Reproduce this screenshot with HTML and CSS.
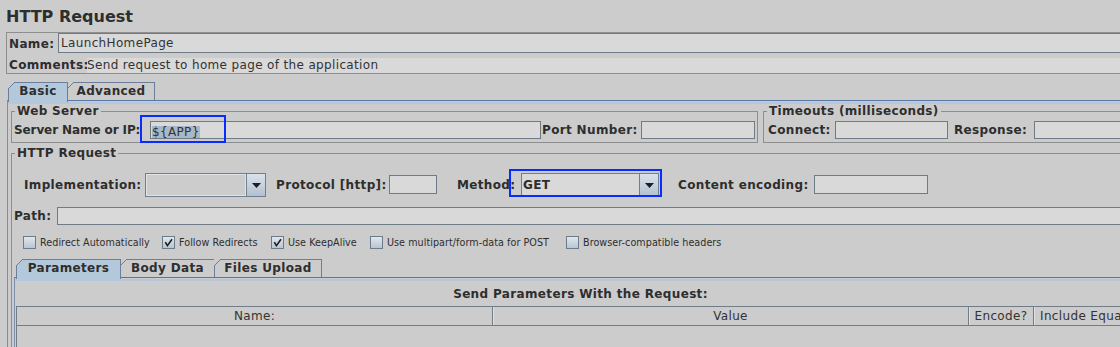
FILE: index.html
```html
<!DOCTYPE html>
<html>
<head>
<meta charset="utf-8">
<title>HTTP Request</title>
<link rel="stylesheet" href="styles.css">
</head>
<body>
<div class="page">
  <h1 class="title">HTTP Request</h1>

  <div class="namebox">
    <div class="row name-row">
      <span class="lbl name-lbl">Name:</span>
      <div class="field name-field">LaunchHomePage</div>
    </div>
    <div class="row comments-row">
      <span class="lbl comments-lbl">Comments:</span>
      <div class="comments-area">Send request to home page of the application</div>
    </div>
  </div>

  <div class="tabs outer-tabs">
    <div class="tab selected tab-basic">Basic</div>
    <div class="tab tab-adv">Advanced</div>
  </div>

  <div class="outer-panel">
    <div class="outer-inner">
      <div class="server-row">
        <fieldset class="group web-server">
          <legend>Web Server</legend>
          <div class="frow">
            <span class="lbl l-server">Server Name or IP:</span>
            <div class="field f-server"><span class="sel">${APP}</span></div>
            <span class="lbl l-port">Port Number:</span>
            <div class="field f-port"></div>
          </div>
        </fieldset>
        <fieldset class="group timeouts">
          <legend>Timeouts (milliseconds)</legend>
          <div class="frow">
            <span class="lbl l-connect">Connect:</span>
            <div class="field f-connect"></div>
            <span class="lbl l-response">Response:</span>
            <div class="field f-response"></div>
          </div>
        </fieldset>
      </div>

      <fieldset class="group http-group">
        <legend>HTTP Request</legend>
        <div class="impl-row">
          <span class="lbl l-impl">Implementation:</span>
          <div class="combo impl-combo">
            <div class="combo-val"></div>
            <div class="combo-btn"><svg width="9" height="5" viewBox="0 0 9 5"><polygon points="0,0 9,0 4.5,5" fill="#1e1e1e"/></svg></div>
          </div>
          <span class="lbl l-proto">Protocol [http]:</span>
          <div class="field f-proto"></div>
          <span class="lbl l-method">Method:</span>
          <div class="combo method-combo">
            <div class="combo-val">GET</div>
            <div class="combo-btn"><svg width="9" height="5" viewBox="0 0 9 5"><polygon points="0,0 9,0 4.5,5" fill="#1e1e1e"/></svg></div>
          </div>
          <span class="lbl l-enc">Content encoding:</span>
          <div class="field f-enc"></div>
        </div>

        <div class="path-row">
          <span class="lbl l-path">Path:</span>
          <div class="field f-path"></div>
        </div>

        <div class="checks">
          <label class="chk c1"><span class="box"></span>Redirect Automatically</label>
          <label class="chk c2"><span class="box"><svg width="11" height="11" viewBox="0 0 11 11"><path d="M2.3 5.2 L4.4 8.6 L9 2.2" fill="none" stroke="#1e1e1e" stroke-width="1.6"/></svg></span>Follow Redirects</label>
          <label class="chk c3"><span class="box"><svg width="11" height="11" viewBox="0 0 11 11"><path d="M2.3 5.2 L4.4 8.6 L9 2.2" fill="none" stroke="#1e1e1e" stroke-width="1.6"/></svg></span>Use KeepAlive</label>
          <label class="chk c4"><span class="box"></span>Use multipart/form-data for POST</label>
          <label class="chk c5"><span class="box"></span>Browser-compatible headers</label>
        </div>

        <div class="tabs inner-tabs">
          <div class="tab selected tab-params">Parameters</div>
          <div class="tab tab-body">Body Data</div>
          <div class="tab tab-files">Files Upload</div>
        </div>
        <div class="inner-panel">
          <div class="inner-content">
            <div class="params-title">Send Parameters With the Request:</div>
            <div class="ptable">
              <div class="thead">
                <div class="th th-name">Name:</div>
                <div class="th th-value">Value</div>
                <div class="th th-encode">Encode?</div>
                <div class="th th-incl">Include Equals?</div>
              </div>
            </div>
          </div>
        </div>
      </fieldset>
    </div>
  </div>

  <div class="annot annot-server"></div>
  <div class="annot annot-method"></div>
</div>
</body>
</html>
```

FILE: styles.css
```css
* { box-sizing: border-box; }
html, body { margin: 0; padding: 0; }
body {
  background: #cccccc;
  font-family: "DejaVu Sans", "Liberation Sans", sans-serif;
  font-size: 12px;
  letter-spacing: 0.35px;
  color: #333333;
  width: 1120px;
  height: 347px;
  overflow: hidden;
}
.page { position: relative; width: 1180px; }

.title {
  margin: 0;
  padding: 7px 0 0 6px;
  height: 32px;
  font-size: 16px;
  font-weight: bold;
  line-height: 20px;
  letter-spacing: 0;
  color: #2e2e2e;
}

.lbl { font-weight: bold; white-space: nowrap; flex: none; color: #2e2e2e; }

.field {
  flex: none;
  height: 18px;
  border: 1px solid #6f7b87;
  background: #d9d9d9;
  line-height: 16px;
  padding-left: 1px;
  white-space: nowrap;
}

/* name / comments */
.namebox {
  margin-left: 6px;
  width: 1170px;
  border: 1px solid #8e8e8e;
  padding-left: 2px;
}
.row { display: flex; align-items: center; }
.name-row { height: 20px; }
.name-lbl { width: 49px; line-height: 20px; padding-top: 1px; }
.name-field { flex: 1; height: 20px; line-height: 18px; padding-left: 2px; }
.comments-row { height: 15px; margin-top: 5px; }
.comments-lbl { width: 78px; line-height: 15px; }
.comments-area { flex: 1; height: 15px; line-height: 15px; background: #d9d9d9; white-space: nowrap; }

/* tabs */
.tabs { display: flex; height: 18px; position: relative; z-index: 1; }
.outer-tabs { margin: 8px 0 0 8px; }
.tab {
  position: relative;
  flex: none;
  height: 18px;
  border: 1px solid #6c7e9a;
  border-bottom: none;
  margin-right: -1px;
  background: #cccccc;
  font-weight: bold;
  color: #2e2e2e;
  text-align: center;
  line-height: 17px;
}
.tab::before {
  content: "";
  position: absolute;
  left: -1px;
  top: -1px;
  width: 7px;
  height: 7px;
  background: linear-gradient(to bottom right, #cccccc 0, #cccccc calc(50% - 0.6px), #6c7e9a calc(50% - 0.6px), #6c7e9a calc(50% + 0.6px), transparent calc(50% + 0.6px));
}
.tab.selected { background: #b4c8dc; height: 20px; z-index: 2; }
.tab-basic { width: 60px; }
.tab-adv { width: 88px; }
.tab-params { width: 105px; }
.tab-body { width: 95px; }
.tab-files { width: 108px; }

/* outer panel */
.outer-panel {
  margin-left: 7px;
  width: 1170px;
  height: 260px;
  border-top: 1px solid #5b74a6;
  border-left: 1px solid #7d8fae;
}
.outer-inner {
  margin-top: 1px;
  border-top: 2px solid #b4c8dc;
  padding-left: 3px;
}

/* fieldsets */
fieldset.group {
  margin: 0;
  min-width: 0;
  border: 1px solid #8e8e8e;
  padding: 3px 2px 3px 2px;
  flex: none;
}
fieldset.group legend {
  padding: 0 2px;
  margin-left: 1px;
  font-weight: bold;
  line-height: 14px;
  color: #2e2e2e;
}
.server-row { display: flex; gap: 5px; }
fieldset.web-server { width: 747px; }
fieldset.timeouts { width: 400px; }
.frow { display: flex; height: 18px; align-items: center; }
.frow .lbl { line-height: 18px; }
.l-server { width: 136px; letter-spacing: -0.1px; }
.f-server { width: 391px; display: flex; align-items: flex-end; }
.sel { display: inline-block; height: 12px; line-height: 12px; background: #a8b8c8; }
.l-port { margin-left: 1px; width: 99px; }
.f-port { width: 114px; }
.l-connect { margin-left: 2px; width: 67px; }
.f-connect { width: 113px; }
.l-response { margin-left: 6px; width: 80px; }
.f-response { width: 150px; }

fieldset.http-group { margin-top: 3px; width: 1138px; height: 240px; padding: 13px 2px 0 2px; }

.impl-row { display: flex; align-items: flex-start; height: 24px; }
.impl-row .lbl { line-height: 24px; }
.impl-row .field { margin-top: 2px; height: 19px; }
.l-impl { margin-left: 10px; width: 121px; }
.l-proto { margin-left: 10px; width: 113px; }
.f-proto { width: 48px; }
.l-method { margin-left: 20px; width: 64px; }
.l-enc { margin-left: 19px; width: 136px; }
.f-enc { width: 114px; }

.combo {
  flex: none;
  display: flex;
  height: 24px;
  border: 1px solid #6f7f8f;
}
.impl-combo { width: 121px; }
.method-combo { width: 138px; }
.combo-val {
  flex: 1;
  padding-left: 1px;
  font-weight: bold;
  line-height: 22px;
  color: #2e2e2e;
  box-shadow: inset 1px 1px 0 #e0e4e8, inset -1px -1px 0 #e0e4e8;
}
.method-combo .combo-val { background: #d9d9d9; box-shadow: none; }
.combo-btn {
  flex: none;
  width: 19px;
  border-left: 1px solid #6f7f8f;
  background: linear-gradient(#dae2ea, #b2c1d0);
  display: flex;
  align-items: center;
  justify-content: center;
}
.combo-btn svg { display: block; }

.path-row { display: flex; height: 18px; margin-top: 10px; }
.l-path { width: 43px; line-height: 18px; }
.f-path { width: 1090px; }

.checks {
  display: flex;
  height: 13px;
  margin-top: 11px;
  padding-left: 9px;
  font-size: 9.6px;
  letter-spacing: 0.05px;
  color: #2e2e2e;
}
.chk { flex: none; display: flex; align-items: center; height: 13px; white-space: nowrap; }
.chk .box {
  flex: none;
  width: 13px;
  height: 13px;
  margin-right: 4px;
  border: 1px solid #6f7b87;
  background: linear-gradient(#e0e7ee, #b8c5d2);
}
.chk .box svg { display: block; }
.c1 { width: 139px; }
.c2 { width: 109px; }
.c3 { width: 99px; }
.c4 { width: 196px; }

.inner-tabs { margin: 10px 0 0 2px; }
.inner-panel {
  width: 1132px;
  height: 90px;
  border-top: 1px solid #5b74a6;
  border-left: 1px solid #7d8fae;
}
.inner-content {
  margin-top: 1px;
  border-top: 2px solid #b4c8dc;
}
.params-title {
  padding-top: 6px;
  font-weight: bold;
  line-height: 14px;
  text-align: center;
  color: #2e2e2e;
}
.ptable {
  margin: 5px 0 0 1px;
  width: 1129px;
  height: 60px;
  border-left: 1px solid #707c88;
  border-top: 1px solid #707c88;
}
.thead { display: flex; height: 19px; border-bottom: 1px solid #707c88; }
.th {
  flex: none;
  height: 18px;
  padding-top: 1px;
  line-height: 17px;
  text-align: center;
  white-space: nowrap;
  overflow: hidden;
  border-right: 1px solid #707c88;
  box-shadow: inset 1px 0 0 #e2e2e2;
}
.th-name { width: 476px; box-shadow: none; }
.th-value { width: 476px; }
.th-encode { width: 65px; }
.th-incl { width: 110px; text-align: left; padding-left: 6px; }

/* annotation overlays */
.annot {
  position: absolute;
  border: 2px solid #0a2bff;
  pointer-events: none;
}
.annot-server { left: 140px; top: 115px; width: 86px; height: 28px; }
.annot-method { left: 509px; top: 169px; width: 153px; height: 28px; }
```
